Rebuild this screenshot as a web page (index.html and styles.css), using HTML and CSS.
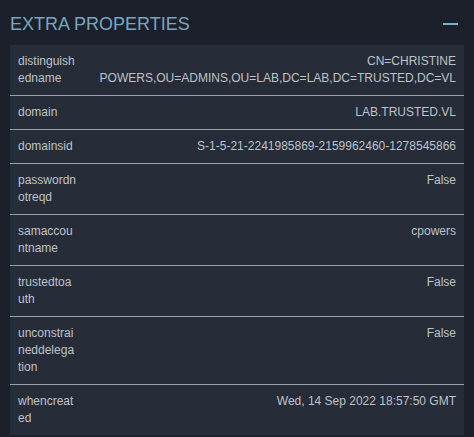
FILE: index.html
```html
<!DOCTYPE html>
<html>
<head>
<meta charset="utf-8">
<link rel="stylesheet" href="styles.css">
</head>
<body>
<section class="panel">
  <header class="panel-head">
    <h2 class="panel-title">EXTRA PROPERTIES</h2>
    <span class="collapse" aria-label="collapse"></span>
  </header>
  <div class="props">
    <div class="row"><div class="key">distinguishedname</div><div class="val">CN=CHRISTINE POWERS,OU=ADMINS,OU=LAB,DC=LAB,DC=TRUSTED,DC=VL</div></div>
    <div class="row"><div class="key">domain</div><div class="val">LAB.TRUSTED.VL</div></div>
    <div class="row"><div class="key">domainsid</div><div class="val">S-1-5-21-2241985869-2159962460-1278545866</div></div>
    <div class="row"><div class="key">passwordnotreqd</div><div class="val">False</div></div>
    <div class="row"><div class="key">samaccountname</div><div class="val">cpowers</div></div>
    <div class="row"><div class="key">trustedtoauth</div><div class="val">False</div></div>
    <div class="row"><div class="key">unconstraineddelegation</div><div class="val">False</div></div>
    <div class="row"><div class="key">whencreated</div><div class="val">Wed, 14 Sep 2022 18:57:50 GMT</div></div>
  </div>
</section>
</body>
</html>
```
FILE: styles.css
```css
html, body {
  margin: 0;
  padding: 0;
  background: #1b202a;
}
body {
  font-family: "Liberation Sans", Arial, sans-serif;
}
.panel {
  padding: 0 10px;
}
.panel-head {
  box-sizing: border-box;
  height: 45px;
  padding-top: 14px;
  display: flex;
  align-items: flex-start;
  justify-content: space-between;
}
.panel-title {
  margin: 0;
  font-size: 18px;
  font-weight: normal;
  line-height: 21px;
  color: #79a6c0;
}
.collapse {
  width: 15px;
  height: 2px;
  background: #7ab0cc;
  margin-right: 6px;
  margin-top: 9px;
}
.props {
  background: #262c38;
}
.row {
  display: flex;
  justify-content: space-between;
  gap: 16px;
  padding: 8px;
  font-size: 12px;
  line-height: 17px;
  color: #bfc3c9;
  border-top: 1px solid #9aa0a7;
}
.row:first-child {
  border-top: none;
}
.key {
  flex: 0 0 58.7px;
  width: 58.7px;
  word-break: break-all;
}
.val {
  flex: 1 1 auto;
  text-align: right;
}
```
